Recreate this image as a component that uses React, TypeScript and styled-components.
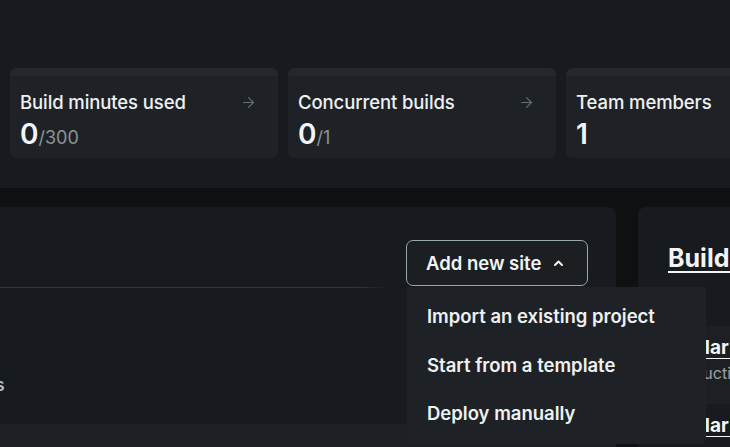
import { createGlobalStyle, styled } from 'styled-components';
import { ArrowRight } from 'lucide-react';

const GlobalStyle = createGlobalStyle`
  html, body {
    margin: 0;
    padding: 0;
    background: #0e1012;
    overflow: hidden;
  }
  body {
    font-family: Inter, "Noto Sans", sans-serif;
    color: #eef1f1;
  }
`;

const Page = styled.div`
  width: 730px;
  height: 447px;
  overflow: hidden;
  display: flex;
  flex-direction: column;
`;

const UsageBand = styled.section`
  background: #171a1e;
  height: 188px;
  box-sizing: border-box;
  padding: 68px 0 0 10px;
  display: flex;
  gap: 10px;
  flex-shrink: 0;
`;

const StatCard = styled.div`
  flex: 0 0 268px;
  height: 90px;
  box-sizing: border-box;
  border-radius: 7px;
  background: linear-gradient(#24282c 0 8px, #1e2226 8px);
  padding: 24px 20px 0 10px;
  display: flex;
  flex-direction: column;
`;

const StatHead = styled.div`
  display: flex;
  justify-content: space-between;
  align-items: center;
  font-size: 18.5px;
  font-weight: 500;
  line-height: 20px;
  color: #eef1f1;
  letter-spacing: -0.1px;
`;

const Arrow = styled(ArrowRight)`
  color: #66716f;
  margin-right: 1px;
`;

const StatValue = styled.div`
  margin-top: 6px;
  display: flex;
  align-items: baseline;
  font-weight: 600;
  font-size: 28px;
  line-height: 32px;
  color: #f3f5f5;
`;

const StatLimit = styled.span`
  font-weight: 400;
  font-size: 18px;
  color: #8b9595;
`;

const Main = styled.div`
  flex: 1;
  padding-top: 19px;
  display: flex;
  gap: 22px;
  min-height: 0;
`;

const SitesPanel = styled.section`
  position: relative;
  flex: 0 0 616px;
  background: #171a1e;
  border-radius: 0 8px 0 0;
  display: flex;
  flex-direction: column;
`;

const SitesHeader = styled.div`
  flex-shrink: 0;
  height: 80px;
  box-sizing: border-box;
  padding: 33px 28px 0 0;
  display: flex;
  justify-content: flex-end;
  align-items: flex-start;
`;

const Divider = styled.div`
  flex-shrink: 0;
  width: 388px;
  height: 1px;
  background: linear-gradient(90deg, #31363a 0 92%, transparent);
`;

const SiteRow = styled.div<{ $shade?: boolean }>`
  flex-shrink: 0;
  height: ${(p) => (p.$shade ? '60px' : '136px')};
  box-sizing: border-box;
  background: ${(p) => (p.$shade ? '#1c2024' : 'transparent')};
  padding-top: 87px;
  font-size: 17px;
  color: #b7bfbf;
  font-weight: 600;
  white-space: nowrap;
`;

const CutLabel = styled.span`
  display: inline-block;
  margin-left: -76px;
`;

const MenuWrap = styled.div`
  position: relative;
`;

const AddButton = styled.button`
  height: 46px;
  width: 182px;
  box-sizing: border-box;
  border: 1.5px solid #98a9a9;
  border-radius: 7px;
  background: #1b1f22;
  color: #f2f5f5;
  font-family: inherit;
  font-size: 18.5px;
  font-weight: 600;
  display: flex;
  align-items: center;
  gap: 12px;
  padding: 0 0 0 19px;
  cursor: pointer;
`;

const Menu = styled.ul`
  position: absolute;
  top: 47px;
  left: 1px;
  width: 299px;
  margin: 0;
  padding: 5px 0 6px;
  list-style: none;
  background: #1e2226;
  border-radius: 0 0 6px 6px;
  z-index: 2;
`;

const MenuItem = styled.li`
  height: 48.5px;
  display: flex;
  align-items: center;
  padding-left: 20px;
  font-size: 18.5px;
  font-weight: 600;
  color: #eef1f1;
`;

const BuildsPanel = styled.section`
  flex: 1;
  background: #171a1e;
  border-radius: 8px 0 0 0;
  padding-top: 36px;
  overflow: hidden;
`;

const BuildsTitle = styled.h2`
  margin: 0 0 0 30px;
  height: 83px;
  font-size: 25px;
  line-height: 30px;
  font-weight: 700;
  text-decoration: underline;
  text-underline-offset: 4px;
  text-decoration-thickness: 2px;
  white-space: nowrap;
  color: #f3f5f5;
`;

const BuildItem = styled.div<{ $active?: boolean }>`
  height: 78px;
  box-sizing: border-box;
  padding: 11px 0 0 30px;
  white-space: nowrap;
  background: ${(p) => (p.$active ? '#1c2024' : 'transparent')};
`;

const BuildName = styled.div`
  font-size: 19px;
  font-weight: 700;
  line-height: 22px;
  text-decoration: underline;
  text-underline-offset: 4px;
  color: #f3f5f5;
`;

const BuildMeta = styled.div`
  margin-top: 4px;
  font-size: 16px;
  color: #9aa3a3;
`;

const stats = [
  { label: 'Build minutes used', value: '0', limit: '/300', link: true },
  { label: 'Concurrent builds', value: '0', limit: '/1', link: true },
  { label: 'Team members', value: '1', limit: '', link: false },
];

export default function App() {
  return (
    <Page>
      <GlobalStyle />
      <UsageBand>
        {stats.map((s) => (
          <StatCard key={s.label}>
            <StatHead>
              {s.label}
              {s.link && <Arrow size={17} strokeWidth={1.5} />}
            </StatHead>
            <StatValue>
              {s.value}
              {s.limit && <StatLimit>{s.limit}</StatLimit>}
            </StatValue>
          </StatCard>
        ))}
      </UsageBand>
      <Main>
        <SitesPanel>
          <SitesHeader>
            <MenuWrap>
              <AddButton>
                Add new site
                <svg width="11" height="8" viewBox="0 0 11 8">
                  <polyline points="2,6 5.5,2.5 9,6" fill="none" stroke="#f2f5f5" strokeWidth="2" strokeLinecap="round" strokeLinejoin="round" />
                </svg>
              </AddButton>
              <Menu>
                <MenuItem>Import an existing project</MenuItem>
                <MenuItem>Start from a template</MenuItem>
                <MenuItem>Deploy manually</MenuItem>
              </Menu>
            </MenuWrap>
          </SitesHeader>
          <Divider />
          <SiteRow>
            <CutLabel>Functions</CutLabel>
          </SiteRow>
          <SiteRow $shade />
        </SitesPanel>
        <BuildsPanel>
          <BuildsTitle>Builds</BuildsTitle>
          <BuildItem $active>
            <BuildName>Acular site</BuildName>
            <BuildMeta>Production</BuildMeta>
          </BuildItem>
          <BuildItem>
            <BuildName>Acular app</BuildName>
          </BuildItem>
        </BuildsPanel>
      </Main>
    </Page>
  );
}
